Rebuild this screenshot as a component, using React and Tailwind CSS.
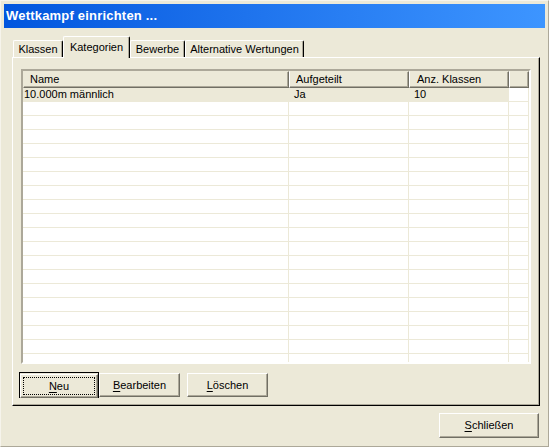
import React from 'react';

const font = { fontFamily: '"Liberation Sans", Arial, sans-serif' };

const columns = [
  { label: 'Name', width: 'w-[266px]', pad: 'pl-[6px]', rowPad: 'pl-[1px]' },
  { label: 'Aufgeteilt', width: 'w-[120px]', pad: 'pl-[6px]', rowPad: 'pl-[5px]' },
  { label: 'Anz. Klassen', width: 'w-[100px]', pad: 'pl-[7px]', rowPad: 'pl-[5px]' },
  { label: '', width: 'w-[20px]', pad: '', rowPad: '' },
];

const rows = [['10.000m männlich', 'Ja', '10', '']];
const emptyRows = Array.from({ length: 20 }, () => ['', '', '', '']);

const Mnemonic = ({ first, rest }) => (
  <span>
    <span className="underline underline-offset-2">{first}</span>
    {rest}
  </span>
);

const Button = ({ children, className = '' }) => (
  <button
    className={`h-[24px] border border-t-white border-l-white border-r-[#716f64] border-b-[#716f64] bg-[#ece9d8] shadow-[inset_-1px_-1px_#aca899] text-[11px] text-black ${className}`}
  >
    {children}
  </button>
);

const Tab = ({ label, active, width }) =>
  active ? (
    <div
      className={`${width} h-[22px] -mb-px relative z-10 bg-[#ece9d8] border-t border-l border-white border-r border-r-black rounded-tl-[2px] rounded-tr-[2px] shadow-[inset_-1px_0_#aca899] flex items-center justify-center pb-[1px] text-[11px]`}
    >
      {label}
    </div>
  ) : (
    <div
      className={`${width} h-[17px] bg-[#ece9d8] border-t border-l border-white border-r border-r-black rounded-tl-[2px] rounded-tr-[2px] shadow-[inset_-1px_0_#aca899] flex items-center justify-center text-[11px]`}
    >
      {label}
    </div>
  );

export default function App() {
  return (
    <div
      style={font}
      className="w-[549px] h-[447px] bg-[#ece9d8] text-black flex flex-col pt-[3px] px-[3px] border-t border-l border-t-[#f6f4ec] border-l-[#f6f4ec] border-r border-b border-r-[#aca899] border-b-[#aca899] overflow-hidden"
    >
      {/* title bar */}
      <div className="h-[24px] bg-linear-to-r from-[#0256de] to-[#3d95ff] flex items-center pl-[2px]">
        <span className="text-white font-bold text-[13px] tracking-[0.2px]">Wettkampf einrichten ...</span>
      </div>

      <div className="mt-[8px] ml-[8px] w-[528px] flex flex-col">
        {/* tabs */}
        <div className="flex items-end h-[21px] pl-[1px]">
          <Tab label="Klassen" width="w-[50px]" />
          <Tab label="Kategorien" width="w-[67px]" active />
          <Tab label="Bewerbe" width="w-[55px]" />
          <Tab label="Alternative Wertungen" width="w-[119px]" />
        </div>

        {/* tab panel */}
        <div className="h-[349px] border-t border-l border-white border-r border-b border-r-black border-b-black shadow-[inset_-1px_-1px_#aca899] flex flex-col">
          <div className="mt-[11px] ml-[8px] w-[510px] h-[295px] border-2 border-t-[#aca899] border-l-[#aca899] border-r-white border-b-white shadow-[inset_1px_1px_#716f64] bg-white overflow-hidden">
            <div className="flex h-[17px]">
              {columns.map((c, i) => (
                <div
                  key={i}
                  className={`${c.width} ${c.pad} h-full bg-[#ece9d8] border-t border-l border-t-[#ece9d8] border-r border-b border-r-[#716f64] border-b-[#716f64] shadow-[inset_-1px_-1px_#aca899] flex items-center text-[11px] ${i === 0 ? 'border-l-[#ece9d8]' : 'border-l-white'}`}
                >
                  {c.label}
                </div>
              ))}
            </div>
            {[...rows, ...emptyRows].map((r, ri) => (
              <div key={ri} className="flex h-[14px]">
                {columns.map((c, ci) => (
                  <div
                    key={ci}
                    className={`${c.width} ${c.rowPad} h-full border-r border-b border-[#ece9d8] flex items-center text-[11px] leading-none ${ri === 0 && ci < 3 ? 'bg-[#ece9d8]' : 'bg-white'}`}
                  >
                    {r[ci]}
                  </div>
                ))}
              </div>
            ))}
          </div>

          <div className="mt-[8px] ml-[6px] flex items-center">
            <div className="w-[80px] h-[26px] border border-black">
              <button className="w-full h-full border border-t-white border-l-white border-r-[#716f64] border-b-[#716f64] bg-[#ece9d8] shadow-[inset_-1px_-1px_#aca899] p-[2px]">
                <span className="w-full h-full border border-dotted border-black flex items-center justify-center text-[11px]">
                  <Mnemonic first="N" rest="eu" />
                </span>
              </button>
            </div>
            <Button className="w-[81px]">
              <Mnemonic first="B" rest="earbeiten" />
            </Button>
            <Button className="w-[81px] ml-[7px]">
              <Mnemonic first="L" rest="öschen" />
            </Button>
          </div>
        </div>
      </div>

      <div className="mt-[7px] flex justify-end pr-[6px]">
        <Button className="w-[100px] h-[25px]">
          <Mnemonic first="S" rest="chließen" />
        </Button>
      </div>
    </div>
  );
}
